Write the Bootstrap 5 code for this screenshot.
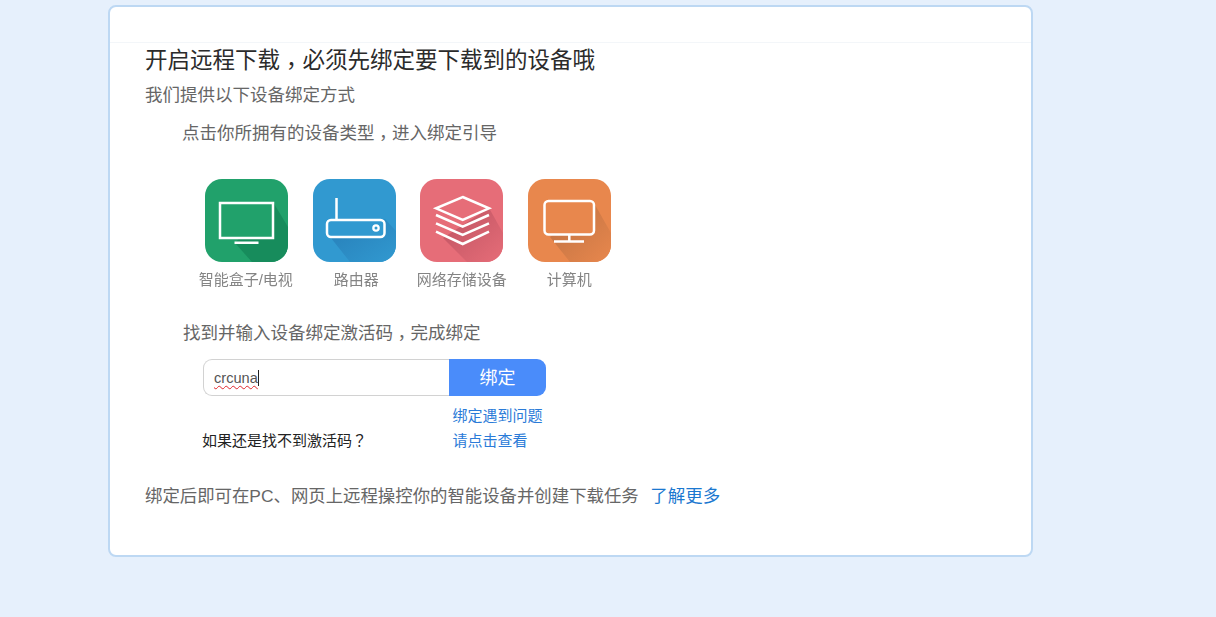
<!DOCTYPE html>
<html lang="zh">
<head>
<meta charset="utf-8">
<title>远程下载</title>
<link rel="stylesheet" href="https://cdn.jsdelivr.net/npm/bootstrap@5.3.0/dist/css/bootstrap.min.css">
<style>
html,body{height:100%;}
body{background:#e6f0fc;font-family:"Liberation Sans","Noto Sans CJK SC",sans-serif;color:#666;overflow:hidden;}
.mid{font-family:"Noto Sans CJK TC",sans-serif;line-height:0;}
.low{vertical-align:-.28em;}
.panel{width:925px;height:552px;margin:5px 0 0 108px;background:#fff;border:2px solid #bdd8f3;border-radius:8px;}
.panel-top{height:36px;border-bottom:1px solid #f3f6f9;}
.panel-body{padding:0 0 0 35px;}
.ttl{font-size:22.5px;line-height:36px;color:#2b2b2b;margin:0;font-weight:400;}
.sub{font-size:17.5px;line-height:24px;margin:4px 0 0;color:#666;}
.step{font-size:17.5px;line-height:24px;margin:0 0 0 37px;color:#666;}
.step-one{margin-top:14px;}
.tiles{margin:34px 0 0 50px;width:440px;}
.tile-col{width:107.5px;flex:none;}
.tile-svg{display:block;width:83px;height:83px;margin-left:10px;filter:blur(.3px);}
.tile-name{font-size:15px;line-height:20px;margin-top:8px;color:#848484;white-space:nowrap;text-align:center;width:107.5px;margin-left:-2px;filter:blur(.45px);}
.tn1{margin-left:-3px;}
.tn2{margin-left:0;}
.step-two{margin:31px 0 0 38px;}
.bind{margin:14px 0 0 58px;width:343px;height:37px;}
.bind-input{flex:1;border:1px solid #d2d2d2;border-right:0;border-radius:9px 0 0 9px;padding:0 10px;font-size:14.6px;line-height:36px;color:#555;}
.typed{text-decoration:underline wavy #e0262b 1px;text-underline-offset:2px;border-right:1px solid #222;}
.bind-btn{width:97px;background:#4a8cfa;border:0;border-radius:0 9px 9px 0;color:#fff;font-size:18px;padding:2px 0 0;}
.help{margin:7px 0 0 57px;font-size:15px;line-height:25px;}
.help-q{width:250.500px;color:#222;align-self:flex-end;}
.help a{color:#2b7bd8;display:block;text-decoration:none;}
.foot{font-size:17.4px;line-height:24px;margin:31px 0 0;color:#666;}
.foot a{margin-left:11.500px;font-size:17.500px;color:#1b78d0;text-decoration:none;}
</style>
</head>
<body>
<div class="panel">
  <div class="panel-top"></div>
  <div class="panel-body">
    <h1 class="ttl">开启远程下载<span class="mid low" lang="zh-Hant">，</span>必须先绑定要下载到的设备哦</h1>
    <p class="sub">我们提供以下设备绑定方式</p>
    <p class="step step-one">点击你所拥有的设备类型<span class="mid low" lang="zh-Hant">，</span>进入绑定引导</p>
    <div class="tiles d-flex">
      <div class="tile-col">
        <svg class="tile-svg" viewBox="0 0 83 83"><defs><clipPath id="c1"><rect width="83" height="83" rx="17"/></clipPath></defs><g clip-path="url(#c1)"><rect width="83" height="83" fill="#21a16b"/><polygon points="68,23 83,48 83,83 47,83 30,64" fill="#178c5c"/></g><rect x="15" y="24" width="53" height="35" fill="#21a16b" stroke="#fff" stroke-width="2.500"/><rect x="29.500" y="62.500" width="24" height="2.500" fill="#fff"/></svg>
        <div class="tile-name tn1">智能盒子/电视</div>
      </div>
      <div class="tile-col">
        <svg class="tile-svg" viewBox="0 0 83 83"><defs><clipPath id="c2"><rect width="83" height="83" rx="17"/></clipPath><linearGradient id="g2" x1="0.300" y1="0.300" x2="1" y2="1"><stop offset="0" stop-color="#2a86bf"/><stop offset="1" stop-color="#3199d0"/></linearGradient></defs><g clip-path="url(#c2)"><rect width="83" height="83" fill="#3199d0"/><polygon points="72,40 83,52 83,83 37,83 18,59" fill="url(#g2)"/></g><path d="M23.500 19V41" stroke="#fff" stroke-width="2.500" fill="none"/><rect x="14" y="41" width="57.500" height="17" rx="4" fill="#3199d0" stroke="#fff" stroke-width="2.500"/><circle cx="63" cy="49" r="3.800" fill="#fff"/><circle cx="63" cy="49" r="1.500" fill="#3199d0"/></svg>
        <div class="tile-name tn2">路由器</div>
      </div>
      <div class="tile-col">
        <svg class="tile-svg" viewBox="0 0 83 83"><defs><clipPath id="c3"><rect width="83" height="83" rx="17"/></clipPath><linearGradient id="g3" x1="0.300" y1="0.300" x2="1" y2="1"><stop offset="0" stop-color="#c95a68"/><stop offset="1" stop-color="#e66d78"/></linearGradient></defs><g clip-path="url(#c3)"><rect width="83" height="83" fill="#e66d78"/><polygon points="69,29 83,54 83,83 47,83 23,59" fill="url(#g3)"/></g><g fill="none" stroke="#fff" stroke-width="2.500"><polygon points="42.700,18 69,29.300 42.700,41 16,29.300" fill="#e66d78"/><path d="M16 36L42.700 47.700L69 36M16 44.300L42.700 56L69 44.300M16 52.700L42.700 65L69 52.700"/></g></svg>
        <div class="tile-name">网络存储设备</div>
      </div>
      <div class="tile-col">
        <svg class="tile-svg" viewBox="0 0 83 83"><defs><clipPath id="c4"><rect width="83" height="83" rx="17"/></clipPath><linearGradient id="g4" x1="0.300" y1="0.300" x2="1" y2="1"><stop offset="0" stop-color="#c97745"/><stop offset="1" stop-color="#e8874d"/></linearGradient></defs><g clip-path="url(#c4)"><rect width="83" height="83" fill="#e8874d"/><polygon points="66,24 83,54 83,83 42,83 22,58" fill="url(#g4)"/></g><rect x="16.500" y="22" width="49.500" height="33.500" rx="4" fill="#e8874d" stroke="#fff" stroke-width="2.500"/><path d="M41.300 55V62M26 62.500H56" stroke="#fff" stroke-width="2.500" fill="none"/></svg>
        <div class="tile-name">计算机</div>
      </div>
    </div>
    <p class="step step-two">找到并输入设备绑定激活码<span class="mid low" lang="zh-Hant">，</span>完成绑定</p>
    <div class="bind d-flex">
      <div class="bind-input"><span class="typed">crcuna</span></div>
      <button class="bind-btn" type="button">绑定</button>
    </div>
    <div class="help d-flex">
      <div class="help-q">如果还是找不到激活码<span class="mid" lang="zh-Hant">？</span></div>
      <div><a href="#">绑定遇到问题</a><a href="#">请点击查看</a></div>
    </div>
    <p class="foot">绑定后即可在PC、网页上远程操控你的智能设备并创建下载任务<a href="#">了解更多</a></p>
  </div>
</div>
<script src="https://cdn.jsdelivr.net/npm/bootstrap@5.3.0/dist/js/bootstrap.bundle.min.js"></script>
</body>
</html>
